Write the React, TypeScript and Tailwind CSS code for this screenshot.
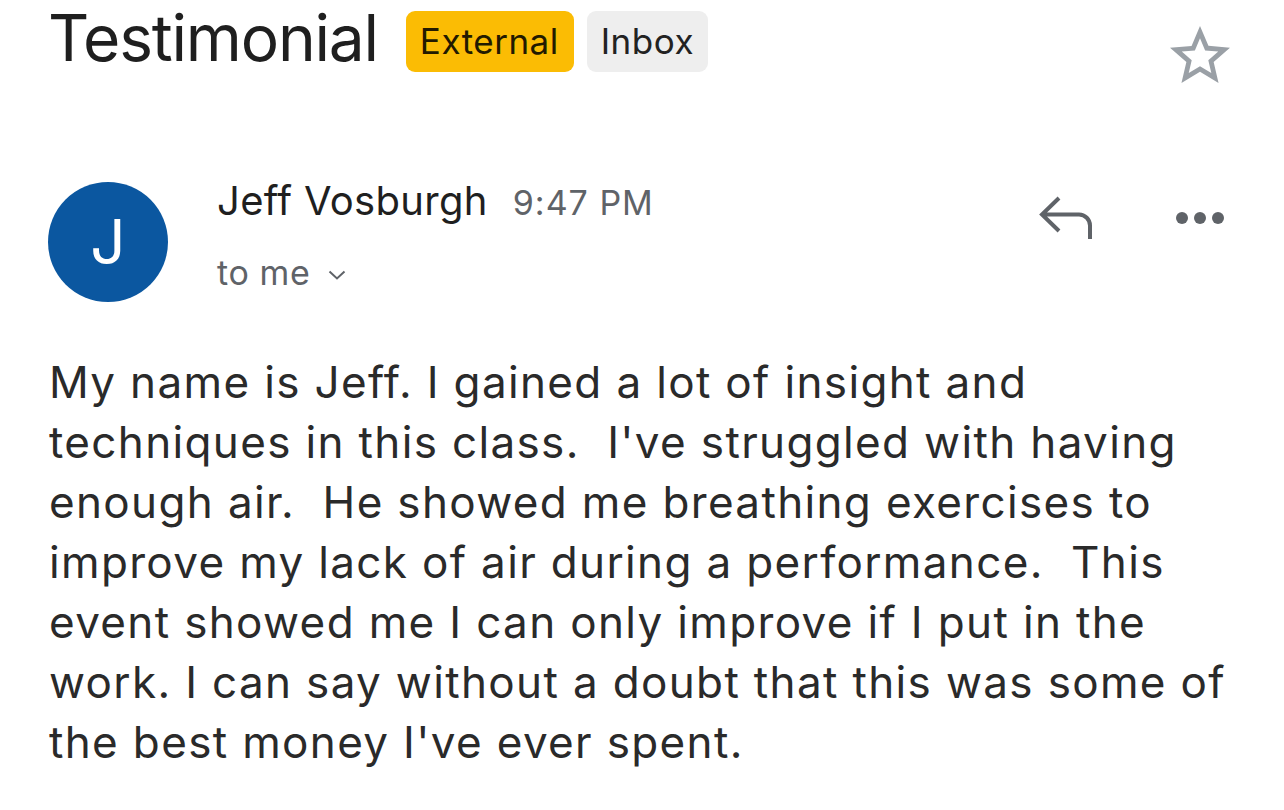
import React from "react";

const lines = [
  "My name is Jeff. I gained a lot of insight and",
  "techniques in this class.  I've struggled with having",
  "enough air.  He showed me breathing exercises to",
  "improve my lack of air during a performance.  This",
  "event showed me I can only improve if I put in the",
  "work. I can say without a doubt that this was some of",
  "the best money I've ever spent.",
];

function StarIcon() {
  return (
    <svg width="72" height="72" viewBox="0 0 24 24" fill="#9aa0a6">
      <path d="M22 9.24l-7.19-.62L12 2 9.19 8.63 2 9.24l5.46 4.73L5.82 21 12 17.27 18.18 21l-1.63-7.03L22 9.24zM12 15.4l-3.76 2.27 1-4.28-3.32-2.88 4.38-.38L12 6.1l1.71 4.04 4.38.38-3.32 2.88 1 4.28L12 15.4z" />
    </svg>
  );
}

function ReplyIcon() {
  return (
    <svg width="56" height="46" viewBox="0 0 56 46" fill="none">
      <path
        d="M21 3 L4 19.5 L21 36 M4 19.5 H41 A11 11 0 0 1 52 30.5 V44"
        stroke="#5f6368"
        strokeWidth="4"
      />
    </svg>
  );
}

function MoreIcon() {
  return (
    <svg width="50" height="14" viewBox="0 0 50 14" fill="#5f6368">
      <circle cx="6" cy="7" r="6" />
      <circle cx="24" cy="7" r="6" />
      <circle cx="42" cy="7" r="6" />
    </svg>
  );
}

export default function App() {
  return (
    <div
      className="w-[1284px] h-[810px] bg-white overflow-hidden"
      style={{ fontFamily: "Inter, Roboto, 'Liberation Sans', sans-serif" }}
    >
      {/* subject line */}
      <div className="flex items-start pl-[48px] pr-[48px]">
        <h1 className="text-[64px] leading-[66px] mt-[5px] text-[#1f1f1f] font-normal tracking-[-1.2px]">
          Testimonial
        </h1>
        <span className="ml-[28px] mt-[11px] h-[61px] pl-[14px] pr-[15px] flex items-center rounded-[9px] bg-[#fbbc04] text-[#221a00] text-[35px] tracking-[0.5px]">
          External
        </span>
        <span className="ml-[13px] mt-[11px] h-[61px] px-[14px] flex items-center rounded-[9px] bg-[#eeeeee] text-[#222] text-[35px] tracking-[0.5px]">
          Inbox
        </span>
        <div className="ml-auto mt-[20px]">
          <StarIcon />
        </div>
      </div>

      {/* sender */}
      <div className="flex items-start pl-[48px] pr-[58px] mt-[90px]">
        <div className="w-[120px] h-[120px] rounded-full bg-[#0b57a0] flex items-center justify-center text-white text-[62px] leading-none">
          J
        </div>
        <div className="ml-[49px] flex flex-col">
          <div className="flex items-baseline mt-[-5px]">
            <span className="text-[40px] leading-[48px] text-[#1f1f1f] tracking-[0.3px]">Jeff Vosburgh</span>
            <span className="ml-[25px] text-[34px] text-[#5f6368] tracking-[1px]">9:47 PM</span>
          </div>
          <div className="flex items-center mt-[25px]">
            <span className="text-[34px] leading-[40px] text-[#5f6368] tracking-[0.6px]">to me</span>
            <svg className="ml-[18px] mt-[4px]" width="18" height="10" viewBox="0 0 18 10" fill="none">
              <path d="M1.5 1.5 L9 8.5 L16.5 1.5" stroke="#5f6368" strokeWidth="2" />
            </svg>
          </div>
        </div>
        <div className="ml-auto flex items-start mt-[13px]">
          <ReplyIcon />
          <div className="ml-[82px] mt-[16px]">
            <MoreIcon />
          </div>
        </div>
      </div>

      {/* body */}
      <div className="pl-[49px] mt-[50px] text-[44px] leading-[60px] text-[#2a2a2a] tracking-[1.35px] whitespace-pre">
        {lines.map((l, i) => (
          <div key={i}>{l}</div>
        ))}
      </div>
    </div>
  );
}
